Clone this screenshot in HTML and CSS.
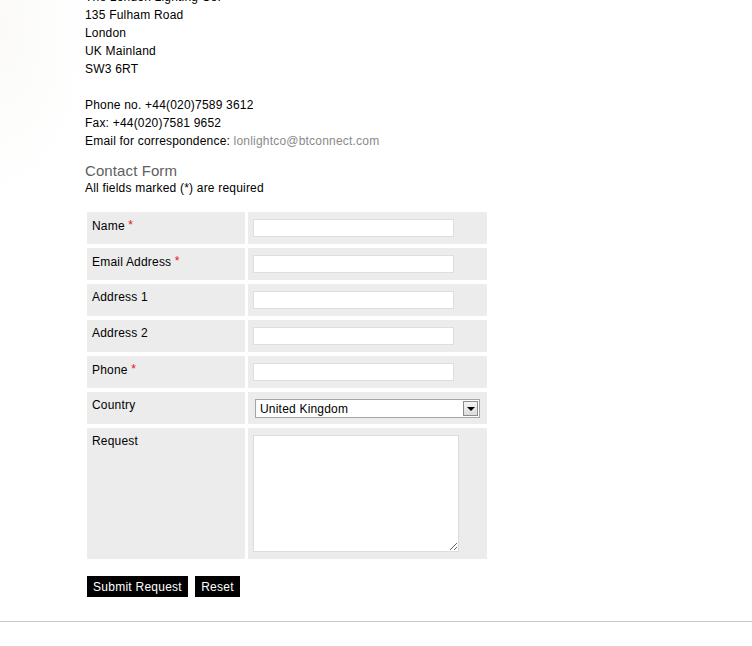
FILE: index.html
```html
<!DOCTYPE html>
<html lang="en">
<head>
<meta charset="utf-8">
<title>Contact</title>
<link rel="stylesheet" href="styles.css">
</head>
<body>
<div class="page">
  <div class="content">
    <div class="address">
      The London Lighting Co.<br>
      135 Fulham Road<br>
      London<br>
      UK Mainland<br>
      SW3 6RT<br>
      <br>
      Phone no. +44(020)7589 3612<br>
      Fax: +44(020)7581 9652<br>
      Email for correspondence: <a class="mail" href="#">lonlightco@btconnect.com</a>
    </div>
    <h2 class="form-title">Contact Form</h2>
    <p class="note">All fields marked (*) are required</p>
    <form class="form">
      <div class="grid">
        <div class="lab">Name <span class="req">*</span></div>
        <div class="fld"><input class="txt" type="text"></div>
        <div class="lab">Email Address <span class="req">*</span></div>
        <div class="fld"><input class="txt" type="text"></div>
        <div class="lab">Address 1</div>
        <div class="fld"><input class="txt" type="text"></div>
        <div class="lab">Address 2</div>
        <div class="fld"><input class="txt" type="text"></div>
        <div class="lab">Phone <span class="req">*</span></div>
        <div class="fld"><input class="txt" type="text"></div>
        <div class="lab">Country</div>
        <div class="fld">
          <div class="selwrap">
            <select class="sel"><option>United Kingdom</option></select>
            <span class="selbtn"><span class="tri"></span></span>
          </div>
        </div>
        <div class="lab">Request</div>
        <div class="fld"><textarea class="area"></textarea></div>
      </div>
      <div class="buttons">
        <button class="btn btn-submit" type="button">Submit Request</button>
        <button class="btn btn-reset" type="button">Reset</button>
      </div>
    </form>
  </div>
  <hr class="rule">
</div>
</body>
</html>
```

FILE: styles.css
```css
html, body {
  margin: 0;
  padding: 0;
  background: #fff;
}
body {
  font-family: "Liberation Sans", Arial, sans-serif;
  font-size: 12px;
  line-height: 18px;
  letter-spacing: 0.2px;
  color: #000;
  height: 646px;
  overflow: hidden;
  background: radial-gradient(ellipse 90px 170px at 0 30px, #fbfaf8 0%, #fdfdfc 55%, #ffffff 100%);
}
.content {
  padding-left: 85px;
}
.address {
  margin-top: -12px;
}
.mail {
  color: #8a8a8a;
  text-decoration: none;
}
.form-title {
  margin: 12px 0 0;
  font-size: 15px;
  font-weight: normal;
  line-height: 17px;
  letter-spacing: 0.1px;
  color: #606060;
}
.note {
  margin: 0;
}
.form {
  margin: 15px 0 0;
}
.grid {
  display: grid;
  grid-template-columns: 158px 239px;
  grid-template-rows: repeat(6, 32px) 131px;
  column-gap: 3px;
  row-gap: 4px;
  margin-left: 2px;
}
.lab, .fld {
  background: #ececec;
}
.lab {
  padding: 4px 5px 0;
}
.fld {
  padding: 7px 5px 0;
}
.req {
  color: #e0161b;
  vertical-align: 1px;
  font-size: 12px;
}
.txt {
  display: block;
  box-sizing: border-box;
  width: 201px;
  height: 18px;
  margin: 0;
  padding: 1px 3px;
  border: 1px solid #dedede;
  background: #fff;
  font: 12px "Liberation Sans", Arial, sans-serif;
  outline: none;
}
.selwrap {
  position: relative;
  width: 225px;
  height: 19px;
  margin-left: 2px;
}
.sel {
  display: block;
  box-sizing: border-box;
  width: 225px;
  height: 19px;
  margin: 0;
  padding: 0 0 0 4px;
  border: 1px solid #a5a5a5;
  border-radius: 0;
  background: #fff;
  color: #000;
  font: 12px "Liberation Sans", Arial, sans-serif;
  letter-spacing: 0.2px;
  -webkit-appearance: none;
  appearance: none;
}
.selbtn {
  position: absolute;
  top: 2px;
  right: 2px;
  width: 15px;
  height: 15px;
  box-sizing: border-box;
  border: 1px solid #8c8c8c;
  background: linear-gradient(#f4f4f4, #dcdcdc);
  display: flex;
  align-items: center;
  justify-content: center;
}
.tri {
  width: 0;
  height: 0;
  border-left: 4px solid transparent;
  border-right: 4px solid transparent;
  border-top: 4px solid #000;
  margin-top: 1px;
}
.area {
  display: block;
  box-sizing: border-box;
  width: 206px;
  height: 117px;
  margin: 0;
  border: 1px solid #dcdcdc;
  background: #fff;
  resize: both;
  font: 12px "Liberation Sans", Arial, sans-serif;
  outline: none;
}
.buttons {
  display: flex;
  gap: 7px;
  margin: 17px 0 0 2px;
}
.btn {
  height: 21px;
  margin: 0;
  padding: 0;
  border: 0;
  border-radius: 0;
  background: #000;
  color: #fff;
  font: 12px "Liberation Sans", Arial, sans-serif;
  letter-spacing: 0.25px;
  line-height: 22px;
  cursor: pointer;
}
.btn-submit {
  width: 101px;
}
.btn-reset {
  width: 45px;
}
.rule {
  margin: 24px 0 0;
  border: 0;
  border-top: 1px solid #c8c8c8;
  height: 0;
}
```
